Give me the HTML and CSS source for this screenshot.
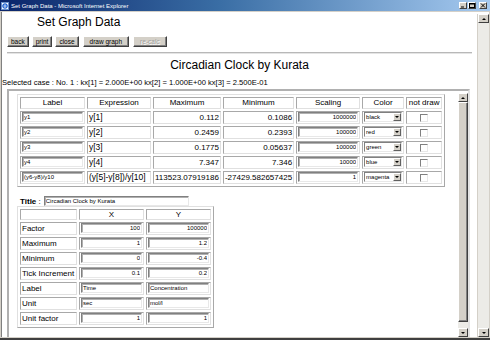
FILE: index.html
```html
<!DOCTYPE html>
<html lang="en">
  <head>
    <meta charset="UTF-8" />
    <meta name="viewport" content="width=device-width, initial-scale=1.0" />
    <title>Set Graph Data</title>
    <link rel="stylesheet" href="styles.css">
  </head>
  <body>
    <div class="window">
      <div class="titlebar">
        <svg class="app-icon" width="8" height="8" viewBox="0 0 8 8">
          <rect x="0.5" y="0.5" width="7" height="7" fill="#fff" stroke="#6a8fc8"/>
          <circle cx="4" cy="4" r="2.2" fill="none" stroke="#1c5fd0" stroke-width="1.2"/>
          <line x1="2" y1="4" x2="6" y2="4" stroke="#1c5fd0" stroke-width="0.9"/>
        </svg>
        <span class="title-text">Set Graph Data - Microsoft Internet Explorer</span>
        <div class="caption-btns">
          <span class="cbtn"><svg width="6" height="5" viewBox="0 0 6 5"><rect x="1" y="3.5" width="3" height="1" fill="#000"/></svg></span>
          <span class="cbtn"><svg width="6" height="5" viewBox="0 0 6 5"><rect x="0.5" y="0.5" width="5" height="4" fill="none" stroke="#000"/><rect x="0.5" y="0.5" width="5" height="1" fill="#000"/></svg></span>
          <span class="cbtn close"><svg width="6" height="5" viewBox="0 0 6 5"><path d="M1 0.5 L5 4.5 M5 0.5 L1 4.5" stroke="#000" stroke-width="1"/></svg></span>
        </div>
      </div>
      <div class="client">
        <div class="page">
          <h1>Set Graph Data</h1>
          <div class="toolbar">
            <button>back</button>
            <button>print</button>
            <button>close</button>
            <button class="wide">draw graph</button>
            <button class="wide" disabled>re-calc</button>
          </div>
          <hr>
          <h2>Circadian Clock by Kurata</h2>
          <p class="case">Selected case : No. 1 : kx[1] = 2.000E+00 kx[2] = 1.000E+00 kx[3] = 2.500E-01</p>
          <div class="frame">
            <div class="frame-body">
              <table class="series">
                <tr>
                  <th class="c-label">Label</th>
                  <th class="c-expr">Expression</th>
                  <th class="c-max">Maximum</th>
                  <th class="c-min">Minimum</th>
                  <th class="c-scale">Scaling</th>
                  <th class="c-color">Color</th>
                  <th class="c-nd">not draw</th>
                </tr>
                <tr>
                  <td><input class="field" value="y1"></td>
                  <td class="expr">y[1]</td>
                  <td class="num">0.112</td>
                  <td class="num">0.1086</td>
                  <td><input class="field right" value="1000000"></td>
                  <td><span class="combo"><span class="combo-val">black</span><span class="combo-btn"></span></span></td>
                  <td class="center"><input type="checkbox" class="check"></td>
                </tr>
                <tr>
                  <td><input class="field" value="y2"></td>
                  <td class="expr">y[2]</td>
                  <td class="num">0.2459</td>
                  <td class="num">0.2393</td>
                  <td><input class="field right" value="100000"></td>
                  <td><span class="combo"><span class="combo-val">red</span><span class="combo-btn"></span></span></td>
                  <td class="center"><input type="checkbox" class="check"></td>
                </tr>
                <tr>
                  <td><input class="field" value="y3"></td>
                  <td class="expr">y[3]</td>
                  <td class="num">0.1775</td>
                  <td class="num">0.05637</td>
                  <td><input class="field right" value="100000"></td>
                  <td><span class="combo"><span class="combo-val">green</span><span class="combo-btn"></span></span></td>
                  <td class="center"><input type="checkbox" class="check"></td>
                </tr>
                <tr>
                  <td><input class="field" value="y4"></td>
                  <td class="expr">y[4]</td>
                  <td class="num">7.347</td>
                  <td class="num">7.346</td>
                  <td><input class="field right" value="10000"></td>
                  <td><span class="combo"><span class="combo-val">blue</span><span class="combo-btn"></span></span></td>
                  <td class="center"><input type="checkbox" class="check"></td>
                </tr>
                <tr>
                  <td><input class="field" value="(y6-y8)/y10"></td>
                  <td class="expr">(y[5]-y[8])/y[10]</td>
                  <td class="num">113523.07919186</td>
                  <td class="num">-27429.582657425</td>
                  <td><input class="field right" value="1"></td>
                  <td><span class="combo"><span class="combo-val">magenta</span><span class="combo-btn"></span></span></td>
                  <td class="center"><input type="checkbox" class="check"></td>
                </tr>
              </table>

              <div class="title-row">
                <span class="title-label"><b>Title</b> :</span>
                <input class="field title-input" value="Circadian Clock by Kurata">
              </div>

              <table class="axes">
                <tr>
                  <th class="a-name"></th>
                  <th class="a-val">X</th>
                  <th class="a-val">Y</th>
                </tr>
                <tr>
                  <td>Factor</td>
                  <td><input class="field right" value="100"></td>
                  <td><input class="field right" value="100000"></td>
                </tr>
                <tr>
                  <td>Maximum</td>
                  <td><input class="field right" value="1"></td>
                  <td><input class="field right" value="1.2"></td>
                </tr>
                <tr>
                  <td>Minimum</td>
                  <td><input class="field right" value="0"></td>
                  <td><input class="field right" value="-0.4"></td>
                </tr>
                <tr>
                  <td>Tick Increment</td>
                  <td><input class="field right" value="0.1"></td>
                  <td><input class="field right" value="0.2"></td>
                </tr>
                <tr>
                  <td>Label</td>
                  <td><input class="field" value="Time"></td>
                  <td><input class="field" value="Concentration"></td>
                </tr>
                <tr>
                  <td>Unit</td>
                  <td><input class="field" value="sec"></td>
                  <td><input class="field" value="mol/l"></td>
                </tr>
                <tr>
                  <td>Unit factor</td>
                  <td><input class="field right" value="1"></td>
                  <td><input class="field right" value="1"></td>
                </tr>
              </table>
            </div>
            <div class="vscroll inner">
              <span class="sbtn up"></span>
              <span class="thumb"></span>
              <span class="sbtn down"></span>
            </div>
          </div>
        </div>
        <div class="vscroll outer">
          <span class="sbtn up"></span>
          <span class="track"></span>
          <span class="sbtn down"></span>
        </div>
      </div>
    </div>
  </body>
</html>
```

FILE: styles.css
```css
body {
  margin: 0;
  padding: 0;
  background: #fff;
  font-family: 'Liberation Sans', Arial, sans-serif;
  overflow: hidden;
}
.window {
  width: 490px;
  height: 340px;
  background: #d4d0c8;
  display: flex;
  flex-direction: column;
  box-sizing: border-box;
  padding: 0 1px 1px 1px;
  border-bottom: 2px solid #404040;
}
.titlebar {
  height: 11px;
  flex: none;
  display: flex;
  align-items: center;
  margin: 0 -1px;
  padding: 0 3px 0 1px;
  background: linear-gradient(to right, #0a246a, #3a6ea5 45%, #a6caf0);
  color: #fff;
  font-size: 6px;
}
.app-icon {
  flex: none;
}
.title-text {
  flex: 1;
  margin-left: 2px;
  white-space: nowrap;
}
.caption-btns {
  display: flex;
  gap: 1px;
}
.cbtn {
  width: 8px;
  height: 7px;
  box-sizing: border-box;
  background: #d4d0c8;
  border: 1px solid;
  border-color: #fff #404040 #404040 #fff;
  display: flex;
  align-items: center;
  justify-content: center;
}
.cbtn.close {
  margin-left: 2px;
}
.client {
  flex: 1;
  display: flex;
  margin-top: 1px;
  background: #fff;
  border-left: 1px solid #808080;
  min-height: 0;
}
.page {
  flex: 1;
  min-width: 0;
  padding: 0 5px;
  display: flex;
  flex-direction: column;
}
h1 {
  margin: 3px 0 0 30px;
  font-size: 12px;
  line-height: 14px;
  font-weight: normal;
  color: #000;
}
.toolbar {
  display: flex;
  gap: 3px;
  margin-top: 7px;
}
.toolbar button {
  height: 11px;
  padding: 0 3px;
  font-family: 'Liberation Sans', Arial, sans-serif;
  font-size: 6.5px;
  line-height: 9px;
  color: #000;
  background: #d4d0c8;
  border: 1px solid;
  border-color: #fff #404040 #404040 #fff;
  box-shadow: inset -1px -1px 0 #808080;
}
.toolbar button.wide {
  padding: 0 6px;
  margin-left: 1px;
}
.toolbar button:disabled {
  color: #a0a0a0;
  text-shadow: 1px 1px 0 #fff;
}
hr {
  margin: 5px 0 0 0;
  height: 0;
  border: 0;
  border-top: 1px solid #b8b8b8;
  border-bottom: 1px solid #e4e4e4;
}
h2 {
  margin: 4px 0 0 0;
  font-size: 12px;
  line-height: 14px;
  font-weight: normal;
  text-align: center;
  color: #000;
}
.case {
  margin: 6px 0 0 -5px;
  font-size: 7.6px;
  line-height: 10px;
  white-space: nowrap;
}
.frame {
  flex: 1;
  min-height: 0;
  margin: 1px 2px 0 0;
  display: flex;
  border-top: 2px solid #b0b0b0;
  border-left: 2px solid #b0b0b0;
  border-right: 2px solid #e4e4e4;
}
.frame-body {
  flex: 1;
  overflow: hidden;
  padding: 3px 0 0 8px;
}
table {
  border-collapse: separate;
  border-spacing: 2px;
  table-layout: fixed;
  border: 1px solid;
  border-color: #e0e0e0 #a8a8a8 #a8a8a8 #e0e0e0;
  font-size: 8px;
  color: #000;
}
th, td {
  box-sizing: border-box;
  border: 1px solid;
  border-color: #a8a8a8 #e0e0e0 #e0e0e0 #a8a8a8;
  padding: 0 1px;
  white-space: nowrap;
  overflow: hidden;
}
th {
  font-weight: normal;
  height: 12px;
  line-height: 10px;
  text-align: center;
}
td {
  height: 13px;
  line-height: 11px;
}
.c-label { width: 65px; }
.c-expr { width: 64px; }
.c-max { width: 65px; }
.c-min { width: 69px; }
.c-scale { width: 64px; }
.c-color { width: 42px; }
.c-nd { width: 36px; }
.expr {
  font-size: 8.5px;
}
.num {
  text-align: right;
}
.center {
  text-align: center;
}
.field {
  display: block;
  width: 100%;
  height: 10px;
  box-sizing: border-box;
  margin: 0;
  padding: 0 1px;
  font-family: 'Liberation Sans', Arial, sans-serif;
  font-size: 6px;
  color: #000;
  background: #fff;
  border: 1px solid;
  border-color: #808080 #e8e8e8 #e8e8e8 #808080;
  box-shadow: inset 1px 1px 0 #b0b0b0;
  outline: none;
}
.field.right {
  text-align: right;
}
td .field,
td .combo {
  margin-bottom: 1px;
}
.combo {
  display: flex;
  width: 38px;
  height: 10px;
  box-sizing: border-box;
  border: 1px solid;
  border-color: #808080 #e8e8e8 #e8e8e8 #808080;
  background: #fff;
}
.combo-val {
  flex: 1;
  font-size: 6px;
  line-height: 8px;
  padding-left: 1px;
  overflow: hidden;
}
.combo-btn {
  width: 8px;
  flex: none;
  box-sizing: border-box;
  background: #d4d0c8;
  border: 1px solid;
  border-color: #fff #606060 #606060 #fff;
  display: flex;
  align-items: center;
  justify-content: center;
}
.combo-btn::before {
  content: "";
  border-left: 2px solid transparent;
  border-right: 2px solid transparent;
  border-top: 2px solid #000;
}
.check {
  appearance: none;
  display: inline-block;
  vertical-align: middle;
  width: 8px;
  height: 8px;
  margin: 0;
  box-sizing: border-box;
  background: #fff;
  border: 1px solid;
  border-color: #808080 #e8e8e8 #e8e8e8 #808080;
}
.title-row {
  display: flex;
  align-items: flex-end;
  margin: 9px 0 0 3px;
  font-size: 8px;
  line-height: 9px;
}
.title-label {
  margin-right: 3px;
}
.title-input {
  width: 145px;
  height: 10px;
}
.axes .a-name { width: 57px; }
.axes .a-val { width: 65px; }
.axes th {
  height: 11px;
  line-height: 9px;
}
.vscroll {
  flex: none;
  width: 10px;
  display: flex;
  flex-direction: column;
}
.vscroll.outer {
  width: 11px;
  background: #ecebe7;
  border-left: 1px solid #d4d0c8;
  margin-top: 2px;
}
.sbtn {
  flex: none;
  height: 9px;
  box-sizing: border-box;
  background: #d4d0c8;
  border: 1px solid;
  border-color: #fff #404040 #404040 #fff;
  display: flex;
  align-items: center;
  justify-content: center;
}
.sbtn.up::before {
  content: "";
  border-left: 2px solid transparent;
  border-right: 2px solid transparent;
  border-bottom: 2px solid #000;
}
.sbtn.down::before {
  content: "";
  border-left: 2px solid transparent;
  border-right: 2px solid transparent;
  border-top: 2px solid #000;
}
.vscroll.inner {
  margin-top: 2px;
  background: #ecebe7;
}
.thumb {
  flex: 1;
  margin-bottom: 6px;
  box-sizing: border-box;
  background: #d4d0c8;
  border: 1px solid;
  border-color: #fff #404040 #404040 #fff;
  box-shadow: inset -1px -1px 0 #808080;
}
.track {
  flex: 1;
}
```
